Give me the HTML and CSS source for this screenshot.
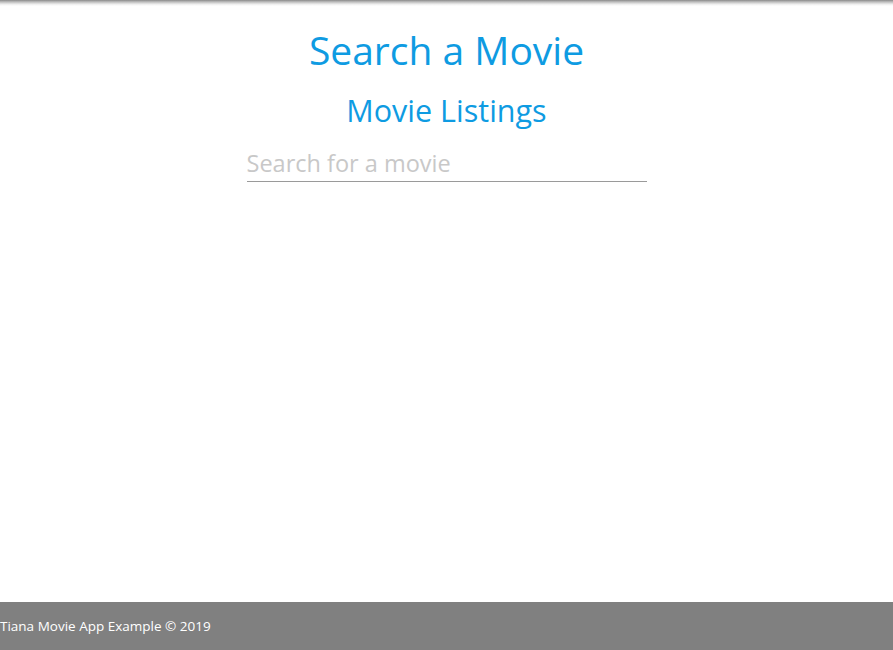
FILE: index.html
```html
<!DOCTYPE html>
<html>
<head>
<meta charset="utf-8">
<link rel="stylesheet" href="styles.css">
</head>
<body>
<div class="topbar"></div>
<main class="content">
  <h1 class="title">Search a Movie</h1>
  <h2 class="subtitle">Movie Listings</h2>
  <input class="search" type="text" placeholder="Search for a movie">
</main>
<footer class="footer">Tiana Movie App Example © 2019</footer>
</body>
</html>
```
FILE: styles.css
```css
html, body {
  margin: 0;
  padding: 0;
  height: 100%;
}
body {
  font-family: "Open Sans", "Noto Sans", sans-serif;
  display: flex;
  flex-direction: column;
  background: #fff;
  position: relative;
}
.topbar {
  position: absolute;
  top: 0; left: 0; right: 0;
  height: 6px;
  background: linear-gradient(#8a8a8a, #bbb 30%, #eee 70%, #fff);
}
.content {
  flex: 1;
  display: flex;
  flex-direction: column;
  align-items: center;
}
.title {
  margin: 25px 0 0;
  font-weight: 400;
  font-size: 39px;
  line-height: 50px;
  color: #0e9be2;
}
.subtitle {
  margin: 15px 0 0;
  font-weight: 400;
  font-size: 30.5px;
  line-height: 40px;
  color: #0e9be2;
}
.search {
  margin-top: 14px;
  width: 400px;
  box-sizing: border-box;
  border: none;
  border-bottom: 1px solid #9a9a9a;
  outline: none;
  padding: 0;
  height: 38px;
  font-family: inherit;
  font-size: 23.5px;
  color: #333;
}
.search::placeholder {
  color: #c8c8c8;
}
.footer {
  height: 48px;
  background: #808080;
  color: #fff;
  font-size: 13.5px;
  line-height: 48px;
  padding-left: 0;
}
```
